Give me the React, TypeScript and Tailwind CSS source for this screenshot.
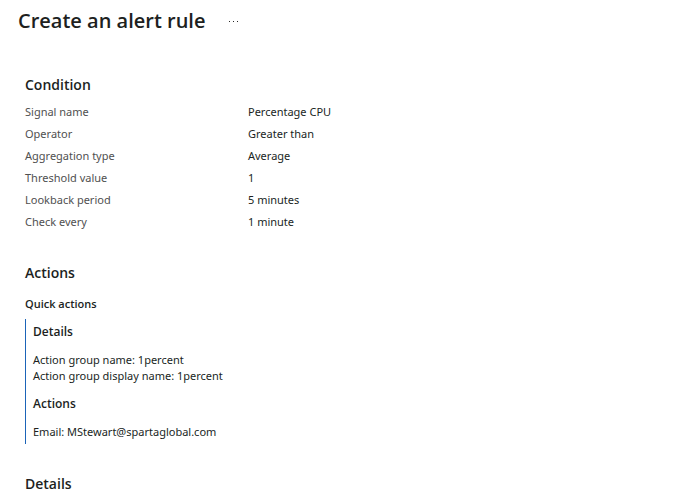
import type { ReactNode } from "react";

const conditions = [
  ["Signal name", "Percentage CPU"],
  ["Operator", "Greater than"],
  ["Aggregation type", "Average"],
  ["Threshold value", "1"],
  ["Lookback period", "5 minutes"],
  ["Check every", "1 minute"],
];

function SectionTitle({ children }: { children: ReactNode }) {
  return <h2 className="font-['Segoe_UI','Open_Sans',sans-serif] text-[14px] leading-5 font-semibold">{children}</h2>;
}

export default function App() {
  return (
    <main className="bg-white font-['Segoe_UI','Noto_Sans',sans-serif] text-[11px] text-[#201f1e]">
      <header className="flex items-center gap-5 px-[18px] pt-[5px]">
        <h1 className="font-['Segoe_UI','Open_Sans',sans-serif] text-[20px] leading-8 font-semibold">
          Create an alert rule
        </h1>
        <button type="button" aria-label="More options" className="flex gap-[3px] p-1">
          <span className="size-px bg-[#292827]" />
          <span className="size-px bg-[#292827]" />
          <span className="size-px bg-[#292827]" />
        </button>
      </header>
      <div className="px-[25px] pt-[38px]">
        <section>
          <SectionTitle>Condition</SectionTitle>
          <dl className="mt-[9px]">
            {conditions.map(([label, value]) => (
              <div key={label} className="flex pb-[6px] leading-4">
                <dt className="w-[223px] shrink-0 text-[#505050]">{label}</dt>
                <dd>{value}</dd>
              </div>
            ))}
          </dl>
        </section>
        <section className="pt-[27px]">
          <SectionTitle>Actions</SectionTitle>
          <h3 className="mt-[13px] font-['Segoe_UI','Open_Sans',sans-serif] leading-4 font-semibold">Quick actions</h3>
          <div className="mt-[7px] border-l border-[#1b64b8] pt-[5px] pb-1 pl-[7px] leading-4">
            <h4 className="font-['Segoe_UI','Open_Sans',sans-serif] text-[12px] font-semibold">Details</h4>
            <p className="mt-3">Action group name: 1percent</p>
            <p>Action group display name: 1percent</p>
            <h4 className="mt-3 font-['Segoe_UI','Open_Sans',sans-serif] text-[12px] font-semibold">Actions</h4>
            <p className="mt-3">Email: MStewart@spartaglobal.com</p>
          </div>
        </section>
        <section className="pt-[30px]">
          <SectionTitle>Details</SectionTitle>
        </section>
      </div>
    </main>
  );
}
